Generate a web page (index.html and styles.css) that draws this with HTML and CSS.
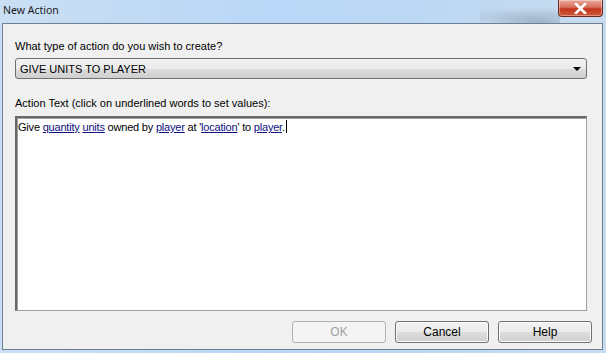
FILE: index.html
```html
<!DOCTYPE html>
<html lang="en">
<head>
    <meta charset="UTF-8">
    <title>New Action</title>
    <link rel="stylesheet" href="styles.css">
</head>
<body>
    <div class="window">
        <div class="titlebar">
            <span class="title">New Action</span>
            <div class="glass"></div>
            <button class="close-btn" aria-label="Close">
                <svg width="13" height="11" viewBox="0 0 13 11">
                    <path d="M2 1 L11 10 M11 1 L2 10" stroke="#fff" stroke-width="2.6" stroke-linecap="square"/>
                </svg>
            </button>
        </div>

        <div class="client">
            <label class="field-label">What type of action do you wish to create?</label>
            <div class="combo">
                <span>GIVE UNITS TO PLAYER</span>
                <span class="arrow"></span>
            </div>

            <label class="field-label second">Action Text (click on underlined words to set values):</label>
            <div class="text-area">
                Give <a>quantity</a> <a>units</a> owned by <a>player</a> at '<a>location</a>' to <a>player</a>.<span class="caret"></span>
            </div>

            <div class="buttons">
                <button class="btn" disabled>OK</button>
                <button class="btn">Cancel</button>
                <button class="btn">Help</button>
            </div>
        </div>
    </div>
</body>
</html>
```

FILE: styles.css
```css
* {
    margin: 0;
    padding: 0;
    box-sizing: border-box;
}

body {
    width: 606px;
    height: 353px;
    overflow: hidden;
    font-family: 'Liberation Sans', Arial, sans-serif;
    font-size: 11px;
    color: #000;
}

.window {
    width: 606px;
    height: 353px;
    display: flex;
    flex-direction: column;
    background: linear-gradient(90deg, #cadff3 0%, #b9d7f7 45%, #bcd8f4 70%, #c8dcef 100%);
}

.titlebar {
    height: 23px;
    display: flex;
    align-items: flex-start;
    position: relative;
    padding-left: 3px;
}

.title {
    font-family: 'Noto Sans', 'Liberation Sans', sans-serif;
    font-size: 10.5px;
    line-height: 21px;
    color: #1b1b1b;
}

.glass {
    position: absolute;
    left: 480px;
    top: 4px;
    width: 80px;
    height: 19px;
    background: radial-gradient(ellipse at 75% 95%, rgba(95,105,120,0.35), rgba(150,165,180,0) 60%),
                radial-gradient(ellipse at 20% 70%, rgba(150,160,175,0.25), rgba(150,165,180,0) 55%);
}

.close-btn {
    position: absolute;
    right: 3px;
    top: 0;
    width: 45px;
    height: 17px;
    border: 1px solid #6b2a22;
    border-top: none;
    border-radius: 0 0 4px 4px;
    background: linear-gradient(180deg, #e9a99a 0%, #d7705b 45%, #c2351d 55%, #cf5a3c 100%);
    box-shadow: inset 0 0 0 1px rgba(255,255,255,0.35);
    display: flex;
    align-items: center;
    justify-content: center;
}

.client {
    flex: 1;
    margin: 0 3px 3px 2px;
    border: 1px solid #6f7f93;
    background: #f0f0f0;
    padding: 16px 15px 0 12px;
    display: flex;
    flex-direction: column;
}

.field-label {
    display: block;
    line-height: 13px;
    height: 13px;
}

.field-label.second {
    margin-top: 18px;
}

.combo {
    margin-top: 5px;
    height: 21px;
    border: 1px solid #707070;
    border-radius: 3px;
    background: linear-gradient(180deg, #f2f2f2 0%, #ebebeb 50%, #dddddd 51%, #cfcfcf 100%);
    display: flex;
    align-items: center;
    justify-content: space-between;
    padding: 0 5px 0 4px;
    font-size: 11px;
}

.arrow {
    width: 0;
    height: 0;
    border-left: 4px solid transparent;
    border-right: 4px solid transparent;
    border-top: 4px solid #000;
    margin-top: 1px;
}

.text-area {
    margin-top: 6px;
    height: 195px;
    background: #fff;
    border-top: 2px solid #696969;
    border-left: 2px solid #696969;
    border-right: 1px solid #a0a0a0;
    border-bottom: 1px solid #a0a0a0;
    box-shadow: inset 1px 1px 0 #a0a0a0;
    padding: 2px 1px;
    line-height: 15px;
    letter-spacing: -0.2px;
}

.text-area a {
    color: #10107e;
    text-decoration: underline;
}

.caret {
    display: inline-block;
    width: 1px;
    height: 13px;
    background: #000;
    vertical-align: -2px;
    margin-left: 1px;
}

.buttons {
    display: flex;
    justify-content: flex-end;
    gap: 9px;
    margin-top: 10px;
    margin-right: -5px;
}

.btn {
    width: 94px;
    height: 22px;
    border: 1px solid #707070;
    border-radius: 3px;
    background: linear-gradient(180deg, #f2f2f2 0%, #ebebeb 50%, #dddddd 51%, #cfcfcf 100%);
    box-shadow: inset 0 0 0 1px #fcfcfc;
    font-family: 'Liberation Sans', Arial, sans-serif;
    font-size: 12px;
    color: #000;
}

.btn:disabled {
    background: #f4f4f4;
    border-color: #adb2b5;
    color: #a0a0a0;
    box-shadow: none;
}
```
